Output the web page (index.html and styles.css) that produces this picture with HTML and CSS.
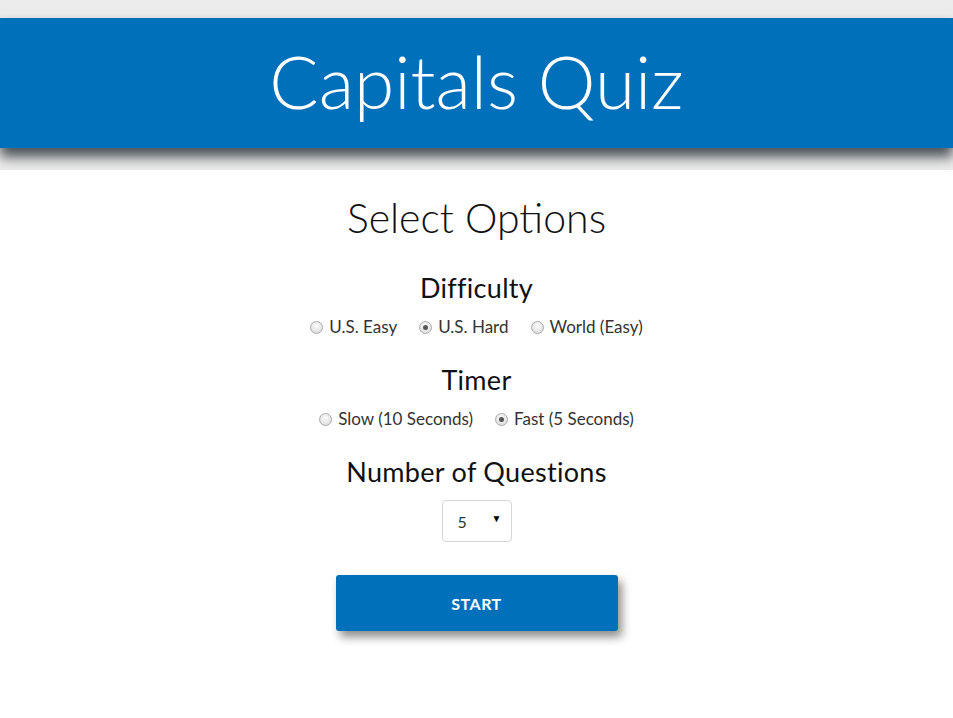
FILE: index.html
```html
<!DOCTYPE html>
<html>
<head>
<meta charset="utf-8">
<link rel="stylesheet" href="styles.css">
</head>
<body>
<header class="banner">
  <h1 class="banner-title">Capitals Quiz</h1>
</header>
<main class="options">
  <h2 class="options-title">Select Options</h2>
  <section class="group">
    <h3 class="group-title">Difficulty</h3>
    <div class="choices">
      <label class="choice"><input type="radio" name="diff"> U.S. Easy</label>
      <label class="choice"><input type="radio" name="diff" checked> U.S. Hard</label>
      <label class="choice"><input type="radio" name="diff"> World (Easy)</label>
    </div>
  </section>
  <section class="group">
    <h3 class="group-title">Timer</h3>
    <div class="choices">
      <label class="choice"><input type="radio" name="timer"> Slow (10 Seconds)</label>
      <label class="choice"><input type="radio" name="timer" checked> Fast (5 Seconds)</label>
    </div>
  </section>
  <section class="group">
    <h3 class="group-title">Number of Questions</h3>
    <div class="select-box">
      <span class="select-value">5</span>
      <span class="select-arrow">&#9660;</span>
    </div>
  </section>
  <button class="start">START</button>
</main>
</body>
</html>
```
FILE: styles.css
```css
html, body {
  margin: 0;
  padding: 0;
}
body {
  background: #ececec;
  font-family: Lato, "Open Sans", sans-serif;
  color: #111;
  padding-top: 18px;
}
.banner {
  background: #0070ba;
  height: 130px;
  display: flex;
  align-items: center;
  justify-content: center;
  box-shadow: 0 9px 12px rgba(20,28,36,0.75);
  position: relative;
  z-index: 1;
}
.banner-title {
  margin: -4px 0 0;
  color: #fff;
  font-weight: 300;
  font-size: 73px;
  line-height: 1;
}
.options {
  margin-top: 22px;
  background: #fff;
  min-height: 548px;
  display: flex;
  flex-direction: column;
  align-items: center;
  padding-top: 24px;
}
.options-title {
  margin: 0 0 30px;
  font-weight: 300;
  font-size: 41px;
  line-height: 48px;
  color: #111;
}
.group {
  display: flex;
  flex-direction: column;
  align-items: center;
  margin-bottom: 25px;
}
.group-title {
  margin: 0 0 11px;
  font-weight: 400;
  font-size: 27px;
  line-height: 32px;
  letter-spacing: 0.3px;
}
.choices {
  display: flex;
  gap: 22px;
  font-size: 17px;
  line-height: 24px;
  color: #333;
}
.choice {
  display: flex;
  align-items: center;
  gap: 6px;
}
.choice input {
  appearance: none;
  -webkit-appearance: none;
  margin: 0;
  width: 13px;
  height: 13px;
  border-radius: 50%;
  border: 1px solid #a9a9a9;
  background: radial-gradient(circle at 50% 35%, #fbfbfb 0%, #e2e2e2 70%, #d4d4d4 100%);
  box-sizing: border-box;
  position: relative;
}
.choice input:checked::after {
  content: "";
  position: absolute;
  left: 3px;
  top: 3px;
  width: 5px;
  height: 5px;
  border-radius: 50%;
  background: #555;
}
.select-box {
  border: 1px solid #d6d6d6;
  border-radius: 4px;
  display: flex;
  align-items: center;
  justify-content: space-between;
  padding: 0 9px 0 15px;
  box-sizing: border-box;
  width: 70px;
  height: 42px;
  margin-top: 1px;
  font-size: 16px;
  color: #333;
}
.select-arrow {
  font-size: 10px;
  color: #000;
  margin-top: -6px;
}
.start {
  margin-top: 8px;
  width: 282px;
  height: 56px;
  background: #0070ba;
  border: none;
  border-radius: 3px;
  color: #fff;
  font-family: Lato, sans-serif;
  font-weight: 700;
  font-size: 16px;
  letter-spacing: 0.5px;
  box-shadow: 4px 6px 10px rgba(0,0,0,0.45);
}
```
